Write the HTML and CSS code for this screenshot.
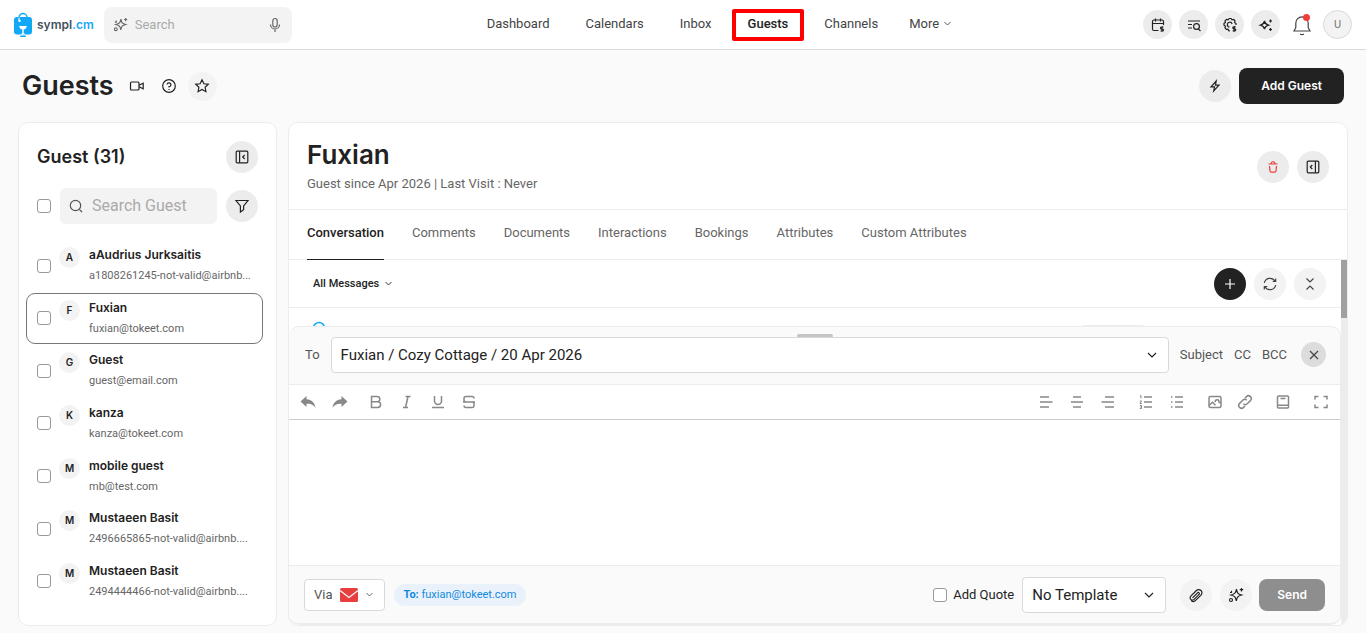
FILE: index.html
```html
<!DOCTYPE html>
<html lang="en">
<head>
<meta charset="utf-8">
<meta name="viewport" content="width=device-width, initial-scale=1">
<title>Guests</title>
<link rel="stylesheet" href="styles.css">
</head>
<body>
<svg class="sprite" aria-hidden="true">
  <symbol id="chevron" viewBox="0 0 12 12"><path d="M2 4l4 4 4-4"/></symbol>
  <symbol id="spark-plus" viewBox="0 0 16 16"><path d="M8.500 2.200C9 6 9.800 7 13.600 8 9.800 9 9 10 8.300 13.800 7.600 10 6.800 9 3 8c3.800-1 4.800-2 5.500-5.800zM13.500 1v3.400M11.800 2.700h3.400M2 5.500h1.800M3.500 3.800v2"/><circle cx="3" cy="13" r="1.500"/></symbol>
</svg>

<header class="topbar">
  <div class="brand-area">
    <a class="brand" href="#" aria-label="sympl.cm">
      <svg class="logo" width="18" height="26" viewBox="0 0 18 26">
        <path d="M5 9V5.500a4 4 0 0 1 8 0V6" fill="none" stroke="#12a8f8" stroke-width="1.400"/>
        <rect x="0" y="5" width="18" height="17.500" rx="3" fill="#12a8f8"/>
        <path d="M5 8.500V5.500" fill="none" stroke="#fff" stroke-width="1"/>
        <circle cx="5.500" cy="8.800" r="1.200" fill="#fff"/>
        <path d="M5.200 14h7.600c-.3 2.300-1.500 3.300-3.100 3.500v3.700l2.300 1.300H6l2.300-1.300v-3.700c-1.600-.2-2.800-1.200-3.100-3.500z" fill="#fff"/>
        <rect x="6" y="23.500" width="6" height="1.500" rx=".7" fill="#12a8f8"/>
      </svg>
      <span>sympl<b>.cm</b></span>
    </a>
    <label class="search">
      <svg class="ico" width="15" height="15"><use href="#spark-plus"/></svg>
      <input type="text" placeholder="Search" aria-label="Search">
      <svg class="ico" width="14" height="16" viewBox="0 0 14 16"><rect x="4.800" y="1.500" width="4.400" height="8.500" rx="2.200"/><path d="M2.500 7.500a4.500 4.500 0 0 0 9 0M7 12v3"/></svg>
    </label>
  </div>
  <nav class="nav">
    <a href="#">Dashboard</a>
    <a href="#">Calendars</a>
    <a href="#">Inbox</a>
    <a href="#" class="current">Guests</a>
    <a href="#">Channels</a>
    <a href="#" class="more">More <svg class="ico" width="9" height="9"><use href="#chevron"/></svg></a>
  </nav>
  <div class="tools">
    <button class="round" aria-label="Rates calendar"><svg class="ico" width="16" height="16" viewBox="0 0 16 16"><path d="M8.500 13.500H4a1.500 1.500 0 0 1-1.500-1.500V4.500A1.500 1.500 0 0 1 4 3h8a1.500 1.500 0 0 1 1.500 1.500V8M2.500 6.500h11M5.500 1.500v3M10.500 1.500v3M13.500 10h-2a1 1 0 0 0 0 2h1a1 1 0 0 1 0 2h-2M12 9.300v5.500"/></svg></button>
    <button class="round" aria-label="Search list"><svg class="ico" width="16" height="16" viewBox="0 0 16 16"><path d="M2 4h12M2 7.500h4M2 11h4M12.300 11.800l2.200 2.200"/><circle cx="10.500" cy="9.500" r="2.900"/></svg></button>
    <button class="round" aria-label="Billing settings"><svg class="ico" width="16" height="16" viewBox="0 0 16 16"><path d="M8 13.800l-1.400-.2-.6-1.500-1.700.3L2.900 10.700l.6-1.500L2 8.200V6.400l1.500-.9-.5-1.700 1.400-1.400 1.700.5L7.200 1.500H9l1 1.400 1.700-.4 1.300 1.300-.4 1.700 1.400 1v1.400"/><path d="M7.500 10a2.400 2.400 0 1 1 2.600-3M13.700 9.800h-1.900a1 1 0 0 0 0 2h1a1 1 0 0 1 0 2h-2.100M12.200 9v5.700"/></svg></button>
    <button class="round" aria-label="Assistant"><svg class="ico" width="16" height="16" viewBox="0 0 16 16"><path d="M6.500 4c.6 2.800 1.300 3.500 4 4.200-2.700.7-3.400 1.400-4 4-.6-2.600-1.300-3.300-4-4 2.700-.7 3.400-1.400 4-4.200z"/><path d="M12.500 2.500v3M11 4h3M12.500 11v3M11 12.500h3"/></svg></button>
    <button class="bell" aria-label="Notifications"><svg class="ico" width="20" height="22" viewBox="0 0 20 22"><path d="M2 17h16l-1.800-3.300V9a6.200 6.200 0 0 0-12.400 0v4.700zM8 20q2 1.300 4 0"/></svg><i></i></button>
    <button class="avatar">U</button>
  </div>
</header>

<main class="page">
  <div class="title-row">
    <h1>Guests</h1>
    <button class="plain" aria-label="Video"><svg class="ico" width="16" height="16" viewBox="0 0 16 16"><rect x="1.500" y="4" width="8.500" height="8" rx="1"/><path d="M10 7.200l4.200-2v5.600l-4.200-2"/></svg></button>
    <button class="plain" aria-label="Help"><svg class="ico" width="16" height="16" viewBox="0 0 16 16"><circle cx="8" cy="8" r="6.300"/><path d="M6 6.500A2 1.900 0 1 1 8 8.600v1M8 11v1"/></svg></button>
    <button class="round pale" aria-label="Favourite"><svg class="ico" width="16" height="16" viewBox="0 0 16 16"><path d="M8 1.800l1.900 4 4.400.5-3.200 3 .8 4.400L8 11.500l-3.900 2.200.8-4.400-3.200-3 4.400-.5z"/></svg></button>
    <span class="grow"></span>
    <button class="round large" aria-label="Quick actions"><svg class="ico" width="16" height="16" viewBox="0 0 16 16"><path d="M9.200 3L4 8.800h3.500l-.8 4.200L12 7.200H8.500z"/></svg></button>
    <button class="add-guest">Add Guest</button>
  </div>

  <div class="columns">
    <aside class="card guests">
      <div class="list-head">
        <h2>Guest (31)</h2>
        <button class="round large" aria-label="Collapse list"><svg class="ico" width="16" height="16" viewBox="0 0 16 16"><rect x="2.200" y="2.200" width="11.600" height="11.600" rx="1"/><path d="M5.600 2.200v11.600M10.700 6l-2 2 2 2"/></svg></button>
      </div>
      <div class="filter-row">
        <input type="checkbox" aria-label="Select all">
        <label class="guest-search">
          <svg class="ico" width="16" height="16" viewBox="0 0 16 16"><circle cx="7.500" cy="7.500" r="5.200"/><path d="M11.300 11.300l2.700 2.700"/></svg>
          <input type="text" placeholder="Search Guest" aria-label="Search Guest">
        </label>
        <button class="round large" aria-label="Filter"><svg class="ico" width="16" height="16" viewBox="0 0 16 16"><path d="M2 2.500h12L9.600 8v3.800L6.400 14V8z"/></svg></button>
      </div>
      <ul class="guest-list">
        <li><input type="checkbox" aria-label="Select aAudrius Jurksaitis"><span class="initial">A</span><div><strong>aAudrius Jurksaitis</strong><span>a1808261245-not-valid@airbnb...</span></div></li>
        <li class="selected"><input type="checkbox" aria-label="Select Fuxian"><span class="initial">F</span><div><strong>Fuxian</strong><span>fuxian@tokeet.com</span></div></li>
        <li><input type="checkbox" aria-label="Select Guest"><span class="initial">G</span><div><strong>Guest</strong><span>guest@email.com</span></div></li>
        <li><input type="checkbox" aria-label="Select kanza"><span class="initial">K</span><div><strong>kanza</strong><span>kanza@tokeet.com</span></div></li>
        <li><input type="checkbox" aria-label="Select mobile guest"><span class="initial">M</span><div><strong>mobile guest</strong><span>mb@test.com</span></div></li>
        <li><input type="checkbox" aria-label="Select Mustaeen Basit"><span class="initial">M</span><div><strong>Mustaeen Basit</strong><span>2496665865-not-valid@airbnb....</span></div></li>
        <li><input type="checkbox" aria-label="Select second Mustaeen Basit"><span class="initial">M</span><div><strong>Mustaeen Basit</strong><span>2494444466-not-valid@airbnb....</span></div></li>
      </ul>
    </aside>

    <section class="card detail">
      <div class="detail-head">
        <div>
          <h2>Fuxian</h2>
          <p>Guest since Apr 2026 | Last Visit : Never</p>
        </div>
        <button class="round large danger" aria-label="Delete guest"><svg class="ico" width="14" height="16" viewBox="0 0 14 16"><path d="M2.500 5h9M5 5c0-3 4-3 4 0M3.500 7l.5 5q.1 1.200 1.200 1.200h3.600q1.100 0 1.200-1.200l.5-5"/></svg></button>
        <button class="round large" aria-label="Expand details"><svg class="ico" width="16" height="16" viewBox="0 0 16 16"><rect x="2.200" y="2.200" width="11.600" height="11.600" rx="1"/><path d="M10.400 2.200v11.600M7.300 6l-2 2 2 2"/></svg></button>
      </div>
      <nav class="tabs">
        <a href="#" class="active">Conversation</a>
        <a href="#">Comments</a>
        <a href="#">Documents</a>
        <a href="#">Interactions</a>
        <a href="#">Bookings</a>
        <a href="#">Attributes</a>
        <a href="#">Custom Attributes</a>
      </nav>
      <div class="scroller">
        <div class="thread">
          <div class="thread-bar">
            <button class="all">All Messages <svg class="ico" width="9" height="9"><use href="#chevron"/></svg></button>
            <button class="round large dark" aria-label="New message"><svg class="ico" width="16" height="16" viewBox="0 0 16 16"><path d="M8 3v10M3 8h10"/></svg></button>
            <button class="round large pale" aria-label="Refresh"><svg class="ico" width="16" height="16" viewBox="0 0 16 16"><path d="M2.300 7A5.800 5.800 0 0 1 13 5.200M13.700 2.500v3h-3M13.700 9A5.800 5.800 0 0 1 3 10.800M2.300 13.500v-3h3"/></svg></button>
            <button class="round large pale" aria-label="Collapse"><svg class="ico" width="16" height="16" viewBox="0 0 16 16"><path d="M4.500 2.500L8 6l3.500-3.500M4.500 13.500L8 10l3.500 3.500"/></svg></button>
          </div>
          <div class="messages">
            <svg width="14" height="14" viewBox="0 0 14 14"><circle cx="7" cy="7" r="5.500" fill="none" stroke="#12a8f8" stroke-width="1.500"/></svg>
            <span class="pill"></span>
          </div>
          <form class="composer">
            <span class="grip"></span>
            <div class="to-row">
              <label for="to">To</label>
              <div class="select to-select">
                <select id="to"><option>Fuxian / Cozy Cottage / 20 Apr 2026</option></select>
                <svg class="ico" width="12" height="12"><use href="#chevron"/></svg>
              </div>
              <button type="button" class="text">Subject</button>
              <button type="button" class="text">CC</button>
              <button type="button" class="text">BCC</button>
              <button type="button" class="close" aria-label="Close"><svg class="ico" width="14" height="14" viewBox="0 0 14 14"><path d="M3 3l8 8M11 3l-8 8"/></svg></button>
            </div>
            <div class="format">
              <div class="group history">
                <button type="button" aria-label="Undo"><svg width="16" height="16" viewBox="0 0 16 16"><path d="M6.500 2L.5 7.500l6 5.500V9.800c4 0 6.500.6 9 3.900-.5-5-4-8-9-8.500z" fill="#888"/></svg></button>
                <button type="button" aria-label="Redo"><svg width="16" height="16" viewBox="0 0 16 16"><path d="M9.500 2l6 5.500-6 5.500V9.800c-4 0-6.500.6-9 3.900.5-5 4-8 9-8.500z" fill="#888"/></svg></button>
              </div>
              <div class="group marks">
                <button type="button" aria-label="Bold"><svg class="ico" width="16" height="16" viewBox="0 0 16 16"><path d="M3.500 2.500h5.700a2.600 2.600 0 0 1 0 5.200H3.500zM3.500 7.700h6.200a2.900 2.900 0 0 1 0 5.800H3.500z"/></svg></button>
                <button type="button" aria-label="Italic"><svg class="ico" width="16" height="16" viewBox="0 0 16 16"><path d="M6.500 2.500h5M4 13.500h5M9 2.500l-2.500 11"/></svg></button>
                <button type="button" aria-label="Underline"><svg class="ico" width="16" height="16" viewBox="0 0 16 16"><path d="M4.500 2v5a3.500 3.500 0 0 0 7 0V2M2 13.500h12"/></svg></button>
                <button type="button" aria-label="Strikethrough"><svg class="ico" width="16" height="16" viewBox="0 0 16 16"><path d="M13 4.500q0-2-2-2H5q-2 0-2 2V6q0 2 2 2M2 8h12M11 8q2 0 2 2v1.500q0 2-2 2H5q-2 0-2-2"/></svg></button>
              </div>
              <span class="grow"></span>
              <div class="group">
                <button type="button" aria-label="Align left"><svg class="ico" width="16" height="16" viewBox="0 0 16 16"><path d="M2 3h9M2 8h12.500M2 13h9"/></svg></button>
                <button type="button" aria-label="Align centre"><svg class="ico" width="16" height="16" viewBox="0 0 16 16"><path d="M4 3h8M2 8h12M4 13h8"/></svg></button>
                <button type="button" aria-label="Align right"><svg class="ico" width="16" height="16" viewBox="0 0 16 16"><path d="M5 3h9M1.500 8H14M5 13h9"/></svg></button>
              </div>
              <div class="group">
                <button type="button" aria-label="Numbered list"><svg class="ico" width="16" height="16" viewBox="0 0 16 16"><path d="M6 3h8M6 8h8M6 13h8"/><path stroke-width="1" d="M2 2l1-.5v3M1.800 7H3.500L2 9.500h1.800M1.800 11.500h1.700v3H1.800M2.300 13h1.200"/></svg></button>
                <button type="button" aria-label="Bulleted list"><svg class="ico" width="16" height="16" viewBox="0 0 16 16"><path d="M6 3h8M6 8h8M6 13h8M2 3h1.500M2 8h1.500M2 13h1.500"/></svg></button>
              </div>
              <div class="group media">
                <button type="button" aria-label="Image"><svg class="ico" width="16" height="16" viewBox="0 0 16 16"><rect x="2" y="2.500" width="12" height="11" rx="1.500"/><path d="M2 11.500l3.500-3.200 3 3M8 8.200c.5-3.500 4.300-3 4 .3M13.800 9l-2-1"/></svg></button>
                <button type="button" aria-label="Link"><svg class="ico" width="16" height="16" viewBox="0 0 16 16"><path d="M9.800 6.200a2.800 2.800 0 0 0-4 0L2.600 9.400a2.800 2.800 0 0 0 4 4L8 12M6.200 9.800a2.800 2.800 0 0 0 4 0l3.200-3.200a2.800 2.800 0 0 0-4-4L8 4"/></svg></button>
              </div>
              <div class="group"><button type="button" aria-label="Library"><svg class="ico" width="16" height="16" viewBox="0 0 16 16"><rect x="2.500" y="2" width="11" height="12" rx="1"/><path d="M2.500 11.200h11M5.500 4.500h5"/></svg></button></div>
              <div class="group"><button type="button" aria-label="Full screen"><svg class="ico" width="16" height="16" viewBox="0 0 16 16"><path d="M2 5.500V2.500h3.500M10.500 2.500H14v3M14 10.500v3h-3.500M5.500 13.500H2v-3"/></svg></button></div>
            </div>
            <textarea aria-label="Message"></textarea>
            <div class="send-row">
              <button type="button" class="via">Via
                <svg width="18" height="14" viewBox="0 0 18 14"><rect width="18" height="14" rx="1.500" fill="#e83e3e"/><path d="M0 2.500l9 7 9-7" fill="none" stroke="#fafafa" stroke-width="1.300"/></svg>
                <svg class="ico" width="9" height="9"><use href="#chevron"/></svg>
              </button>
              <span class="recipient"><b>To:</b> fuxian@tokeet.com</span>
              <span class="grow"></span>
              <label class="quote"><input type="checkbox"> Add Quote</label>
              <div class="select template">
                <select aria-label="Template"><option>No Template</option></select>
                <svg class="ico" width="12" height="12"><use href="#chevron"/></svg>
              </div>
              <div class="extras">
                <button type="button" class="round large pale" aria-label="Attach"><svg class="ico" width="16" height="16" viewBox="0 0 16 16"><path d="M4.500 10.800l5-5a1 1 0 0 1 1.600 1.600l-5 5a2.300 2.300 0 0 1-3.300-3.300l5.600-5.600a3.200 3.200 0 0 1 4.600 4.600l-5.600 5.600a2.800 2.800 0 0 1-4.300-.2"/></svg></button>
                <button type="button" class="round large pale" aria-label="Write with assistant"><svg class="ico" width="16" height="16"><use href="#spark-plus"/></svg></button>
              </div>
              <button type="button" class="send">Send</button>
            </div>
          </form>
        </div>
        <div class="track"><span></span></div>
      </div>
    </section>
  </div>
</main>
</body>
</html>
```

FILE: styles.css
```css
* { box-sizing: border-box; }
body {
  margin: 0;
  min-height: 100vh;
  display: flex;
  flex-direction: column;
  background: #fafafa;
  color: #222;
  font: 13px/20px Roboto, "Liberation Sans", sans-serif;
}
h1, h2, p, ul { margin: 0; padding: 0; }
h1, h2 { font-family: Inter, Roboto, sans-serif; font-weight: 600; }
a { color: inherit; text-decoration: none; }
button, input, select, textarea { font: inherit; color: inherit; margin: 0; }
button { border: 0; padding: 0; background: none; display: flex; align-items: center; justify-content: center; flex: none; }
svg { flex: none; display: block; }
.sprite { display: none; }
.ico { fill: none; stroke: currentColor; stroke-width: 1.2; }
.grow { flex: 1; }

input[type="checkbox"] {
  appearance: none;
  width: 14px;
  height: 14px;
  border: 1px solid #999;
  border-radius: 3px;
  background: #fff;
  flex: none;
}
.round { width: 29px; height: 29px; border-radius: 50%; background: #ececec; }
.round.large { width: 32px; height: 32px; }
.round.pale { background: #f3f3f3; }
.round.dark { background: #222; color: #fff; }
.round.danger { color: #e83e3e; }

.topbar {
  height: 50px;
  padding: 0 14px;
  display: flex;
  align-items: center;
  justify-content: space-between;
  background: #fff;
  border-bottom: 1px solid #d9d9d9;
}
.brand-area { display: flex; align-items: center; gap: 10px; }
.brand { display: flex; align-items: center; gap: 5px; font: 600 12px/20px Inter, sans-serif; color: #44525e; }
.brand b { color: #12a8f8; font-weight: 600; }
.search {
  width: 188px;
  height: 36px;
  padding: 0 10px 0 9px;
  display: flex;
  align-items: center;
  gap: 7px;
  border-radius: 8px;
  background: #f3f3f3;
  color: #666;
}
.search input, .guest-search input { flex: 1; width: 0; min-width: 0; border: 0; padding: 0; background: none; outline: 0; }
.search input { font-size: 13px; }
::placeholder { color: #aaa; opacity: 1; }
.nav { display: flex; gap: 36px; color: #444; padding: 0 0 2px 4px; }
.nav a { position: relative; }
.nav .current { font-weight: 500; color: #222; }
.nav .current::after {
  content: "";
  position: absolute;
  inset: -5px -16px -7px;
  border: 4px solid #f00;
  border-radius: 2px;
}
.nav .more { display: flex; align-items: center; gap: 4px; margin-left: -5px; }
.tools { display: flex; align-items: center; gap: 7px; }
.bell { position: relative; width: 29px; height: 29px; color: #444; }
.bell i { position: absolute; top: 4px; right: 6px; width: 7px; height: 7px; border-radius: 50%; background: #f23c3c; }
.avatar { width: 29px; height: 29px; border: 1px solid #d9d9d9; border-radius: 50%; background: #f3f3f3; color: #777; font-size: 11px; }

.page { flex: 1; display: flex; flex-direction: column; padding: 0 18px 7px; }
.title-row { height: 72px; padding: 0 4px; display: flex; align-items: center; }
.title-row h1 { font-size: 27px; line-height: 36px; margin-right: 15px; }
.title-row .plain { width: 16px; height: 16px; margin-right: 16px; }
.title-row .pale { margin-left: -5px; }
.add-guest { height: 36px; padding: 0 22px; margin-left: 8px; border-radius: 8px; background: #222; color: #fff; font: 600 12px/20px Inter, sans-serif; }

.columns { flex: 1; display: grid; grid-template-columns: 259px minmax(0, 1fr); gap: 11px; }
.card { background: #fff; border: 1px solid #ececec; border-radius: 10px; overflow: hidden; display: flex; flex-direction: column; }
.guests { padding: 18px 13px 18px 7px; }
.list-head, .filter-row { display: flex; align-items: center; justify-content: space-between; padding: 0 5px 0 11px; }
.list-head h2 { font-size: 18px; line-height: 32px; }
.filter-row { margin-top: 15px; gap: 9px; }
.guest-search { flex: 1; min-width: 0; height: 36px; display: flex; align-items: center; gap: 8px; padding: 0 8px; border-radius: 6px; background: #f3f3f3; color: #555; }
.guest-search input { font-size: 16px; }
.guest-list { flex: 1; margin-top: 16px; list-style: none; display: flex; flex-direction: column; justify-content: space-between; }
.guest-list li { height: 51px; padding: 0 9px 0 10px; display: flex; align-items: center; gap: 8px; border: 1px solid transparent; border-radius: 9px; }
.guest-list .selected { border-color: #777; }
.initial { width: 21px; height: 21px; margin-top: -16px; border-radius: 50%; background: #f3f3f3; text-align: center; font: 600 10px/21px Inter, sans-serif; }
.guest-list div { display: flex; flex-direction: column; margin-left: 1px; white-space: nowrap; }
.guest-list strong { font: 600 12px/20px Inter, sans-serif; }
.guest-list div span { font-size: 11px; line-height: 21px; color: #666; }

.detail-head { height: 87px; padding: 1px 18px 0; display: flex; align-items: center; gap: 8px; border-bottom: 1px solid #ececec; }
.detail-head > div { flex: 1; }
.detail-head h2 { font-size: 26px; line-height: 34px; }
.detail-head p { color: #666; line-height: 24px; }
.tabs { height: 50px; padding: 0 18px; display: flex; gap: 28px; color: #666; border-bottom: 1px solid #ececec; }
.tabs a { line-height: 46px; white-space: nowrap; }
.tabs .active { font-weight: 500; color: #222; height: 50px; border-bottom: 1px solid #222; }

.scroller { flex: 1; display: flex; }
.thread { flex: 1; min-width: 0; display: flex; flex-direction: column; }
.track { width: 6px; background: #ececec; }
.track span { display: block; height: 58px; background: #a0a0a0; }
.thread-bar { height: 48px; padding: 0 15px 0 24px; display: flex; align-items: center; gap: 8px; border-bottom: 1px solid #ececec; }
.thread-bar .pale { color: #444; }
.all { gap: 5px; margin-right: auto; font-size: 11px; font-weight: 500; }
.messages { height: 18px; padding: 13px 196px 0 23px; display: flex; justify-content: space-between; overflow: hidden; }
.pill { width: 64px; height: 20px; margin-top: 4px; border-radius: 4px; background: #ececec; }

.composer { position: relative; flex: 1; display: flex; flex-direction: column; border: 1px solid #ececec; border-bottom-width: 2px; border-left: 0; border-radius: 10px; background: #fafafa; }
.grip { position: absolute; top: 7px; left: 50%; width: 36px; height: 4px; margin-left: -18px; border-radius: 2px; background: #c4c4c4; }
.to-row { height: 58px; padding: 0 14px 2px 16px; display: flex; align-items: center; gap: 11px; border-bottom: 1px solid #ececec; color: #555; }
.select { position: relative; height: 36px; display: flex; align-items: center; color: #222; }
.select select { width: 100%; height: 100%; appearance: none; padding: 0 30px 0 9px; border: 1px solid #d9d9d9; border-radius: 4px; background: #fff; font-size: 15px; }
.select .ico { position: absolute; right: 11px; pointer-events: none; }
.to-select { flex: 1; }
.close { width: 25px; height: 25px; margin-left: 3px; border-radius: 50%; background: #dcdcdc; color: #444; }
.format { height: 35px; padding: 0 11px; display: flex; align-items: center; gap: 22px; background: #fff; border-bottom: 1px solid #ccc; color: #888; }
.group { display: flex; gap: 15px; }
.history { gap: 16px; }
.media { gap: 14px; }
.marks { margin-left: -2px; }
.format .ico { stroke-width: 1.5; }
textarea { flex: 1; min-height: 100px; width: 100%; padding: 12px; border: 0; resize: none; outline: 0; background: #fff; display: block; }
.send-row { height: 58px; padding: 0 15px; display: flex; align-items: center; border-top: 1px solid #ececec; }
.via { height: 32px; padding: 0 10px 0 9px; gap: 7px; border: 1px solid #d9d9d9; border-radius: 4px; background: #fff; color: #555; }
.recipient { margin-left: 9px; padding: 0 10px; height: 22px; line-height: 22px; border-radius: 11px; background: #e9f2fa; color: #1289e0; font-size: 11px; }
.quote { display: flex; align-items: center; gap: 6px; margin-right: 8px; }
.template { width: 144px; }
.extras { display: flex; gap: 8px; margin: 0 7px 0 14px; }
.send { height: 32px; padding: 0 18px; border-radius: 8px; background: #8e8e8e; color: #fff; font: 600 12px/20px Inter, sans-serif; }
```
